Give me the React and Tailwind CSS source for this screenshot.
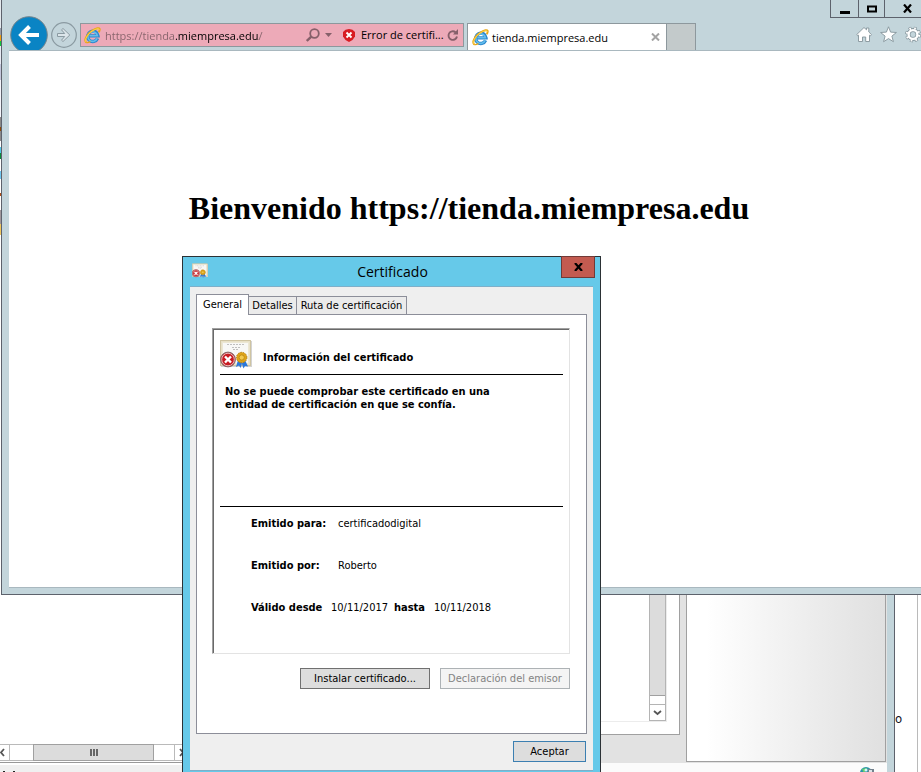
import React from "react";

const ui = "font-['DejaVu_Sans_Condensed','DejaVu_Sans',sans-serif]";

function ExplorerLogo() {
  return (
    <svg width="17" height="17" viewBox="0 0 17 17" className="shrink-0" aria-hidden="true">
      <path d="M13.6 11.4A5.2 5.2 0 1 1 14 8.9H5.4" fill="none" stroke="#2a86cc" strokeWidth="3.4" />
      <path d="M13.2 11.2A4.8 4.8 0 1 1 13.4 8.7H5.4" fill="none" stroke="#62bdec" strokeWidth="1.6" />
      <path d="M2.2 15.4C-.4 13.3 3 7 8 3.8 12 1 16 .2 15.7 2.6c-.1 1-.5 1.900-1 2.500" fill="none" stroke="#e8a818" strokeWidth="1.9" />
      <path d="M2.200 15.200C.2 13.300 3.200 7.200 8.200 4 12 1.500 15.400.9 15.300 2.800" fill="none" stroke="#fad956" strokeWidth=".9" />
      <path d="M2.200 15.400c1.200.6 3-.1 4.200-.9" fill="none" stroke="#e8a818" strokeWidth="1.300" />
    </svg>
  );
}

function CertificateIcon({ size }) {
  return (
    <svg width={size} height={size} viewBox="0 0 32 32" className="shrink-0" aria-hidden="true">
      <rect x="1" y="2" width="31" height="26" fill="#d4d4d4" />
      <rect x=".5" y="1.500" width="30" height="25" fill="#e8e1c8" stroke="#cfc4a2" />
      <rect x="2.500" y="3.500" width="26" height="21" fill="#f8f8f6" stroke="#ece7d4" />
      <path d="M7 5.500h18M12 8.500h8M13 10.500h6" stroke="#b8b8b8" strokeWidth=".9" strokeDasharray="2 1" />
      <path d="M18 21l-2 7 3-1.500 1.600 2.500 1.900-6zM25 21l3 6.500-3-.5-1.500 2.500-2-6z" fill="#2a78dc" />
      <circle cx="21.700" cy="18.500" r="5.200" fill="#dfa418" stroke="#b47c0a" strokeDasharray="1.500 1" />
      <circle cx="21.700" cy="18.500" r="2.600" fill="#f2c94e" stroke="#b98510" strokeWidth=".8" />
      <circle cx="8" cy="20.500" r="7.400" fill="#c81c22" stroke="#7b6b6b" />
      <circle cx="8" cy="20.500" r="6.300" fill="none" stroke="#eccaca" strokeWidth=".9" />
      <path d="M5 17.500l6 6M11 17.500l-6 6" stroke="#fff" strokeWidth="2.400" />
    </svg>
  );
}

const stripes = [
  ["h-[28px]", "bg-[#e4eaee]"], ["h-[7px]", "bg-[#98a0ac]"], ["h-[6px]", "bg-[#f0a010]"],
  ["h-[5px]", "bg-[#12c840]"], ["h-[18px]", "bg-[#e8ecf4]"], ["h-[16px]", "bg-[#c4c8dc]"],
  ["h-[37px]", "bg-[#f4f6fc]"], ["h-[10px]", "bg-[#8a8a8a]"], ["h-[4px]", "bg-[#8a4a08]"],
  ["h-[10px]", "bg-[#8a8a8a]"], ["h-[6px]", "bg-white"], ["h-[6px]", "bg-[#50c8e8]"],
  ["h-[6px]", "bg-[#0c8a3c]"], ["h-[12px]", "bg-white"], ["h-[8px]", "bg-[#70c8f0]"],
  ["h-[14px]", "bg-white"], ["h-[3px]", "bg-[#b05018]"], ["h-[14px]", "bg-white"],
  ["h-[14px]", "bg-[#a0989c]"], ["h-[11px]", "bg-[#f0c860]"],
];

function BackgroundWindow() {
  return (
    <div className="absolute inset-0 flex">
      <div className="flex min-w-0 flex-1 flex-col border-r border-[#5d626c] bg-[#c3d5db] pr-[7px]">
        <div className="flex min-h-0 flex-1 bg-[#e2e2e2]">
          <div className="flex w-[190px] shrink-0 flex-col bg-white">
            <div className="flex w-px flex-1 flex-col">
              {stripes.map(([h, c], i) => (
                <span key={i} className={`${h} ${c} w-px shrink-0`} />
              ))}
            </div>
            <div className="flex h-[17px] shrink-0 border-y border-[#bababa] bg-white">
              <button aria-label="Izquierda" className="flex w-[10px] items-center border-r border-[#bababa]">
                <svg width="5" height="9" viewBox="0 0 5 9"><path d="M4 1L1 4.500 4 8" fill="none" stroke="#555" strokeWidth="1.800" /></svg>
              </button>
              <span className="w-[23px]" />
              <span className="-my-px flex w-[121px] items-center justify-center gap-px border border-[#a0a0a0] bg-[#dcdcdc]">
                <i className="h-[7px] w-[2px] bg-[#666]" />
                <i className="h-[7px] w-[2px] bg-[#666]" />
                <i className="h-[7px] w-[2px] bg-[#666]" />
              </span>
              <button aria-label="Derecha" className="ml-5 flex items-center border-l border-[#bababa] pl-1">
                <svg width="5" height="9" viewBox="0 0 5 9"><path d="M1 1l3 3.500L1 8" fill="none" stroke="#555" strokeWidth="1.800" /></svg>
              </button>
            </div>
            <div className="h-[2px] border-b border-[#999]" />
          </div>
          <div className="mb-[28px] flex min-w-0 flex-1 border-r border-b border-[#a0a0a0] bg-white pr-3 pb-3">
            <div className="flex flex-1 justify-end border-r border-b border-[#ececec]">
              <div className="flex w-[17px] flex-col border-x border-[#b4b4b4] bg-white">
                <span className="flex-1 border-b border-[#a0a0a0] bg-[#dcdcdc]" />
                <span className="h-2" />
                <button aria-label="Abajo" className="flex h-[17px] items-center justify-center border-y border-[#b4b4b4]">
                  <svg width="9" height="6" viewBox="0 0 9 6"><path d="M1 1l3.500 3L8 1" fill="none" stroke="#555" strokeWidth="1.800" /></svg>
                </button>
              </div>
            </div>
          </div>
          <div className="mb-px ml-[6px] w-[200px] shrink-0 border border-[#a0a0a0] bg-linear-to-r from-white from-10% to-[#e0e0e0]" />
          <span className="w-px bg-[#e2e2e2]" />
        </div>
        <div className="flex h-[9px] shrink-0 justify-between bg-[#fbfbfb]">
          <div className="flex w-[190px] items-end gap-2 border-t-2 border-white bg-[#f0f0f0] pl-[3px]">
            <i className="h-px w-[2px] bg-[#222]" />
            <i className="h-px w-[2px] bg-[#222]" />
          </div>
          <svg width="28" height="9" viewBox="0 0 28 9" aria-hidden="true">
            <circle cx="7" cy="10" r="6" fill="#2c95a8" />
            <path d="M3 6l5-1-3 5z" fill="#65d36a" />
            <circle cx="7" cy="7" r="1.500" fill="#d8f4f8" />
            <rect x="9" y="6" width="6" height="3" fill="#71808c" />
            <rect x="10" y="7" width="3" height="2" fill="#dce4e8" />
          </svg>
        </div>
      </div>
      <div className={`${ui} flex w-[26px] shrink-0 items-end bg-white`}>
        <div className="h-full w-[23px] border-r border-[#bababa]">
          <div className="flex h-full items-end pb-[45px] text-[13px] leading-4 text-[#112]">o</div>
        </div>
      </div>
    </div>
  );
}

function BrowserWindow() {
  const frame = "flex items-center justify-center border-b border-l border-[#5d626c]";
  return (
    <section className="absolute top-0 -right-4 left-px flex h-[595px] flex-col border-b border-l border-[#5d626c] bg-[#c3d5db] pr-2 pb-[6px] font-['Open_Sans','Noto_Sans',sans-serif] text-[11px]">
      <header className="flex h-[50px] shrink-0 flex-col overflow-hidden">
        <div className="flex h-[18px] shrink-0 justify-end">
          <button aria-label="Minimizar" className={`${frame} w-[28px]`}>
            <svg width="10" height="10"><path d="M0 8.500h10" stroke="#000" strokeWidth="3" /></svg>
          </button>
          <button aria-label="Maximizar" className={`${frame} w-[26px]`}>
            <svg width="10" height="10"><path d="M1 2.500h8v5H1z" fill="none" stroke="#000" strokeWidth="2" /></svg>
          </button>
          <button aria-label="Cerrar" className={`${frame} w-[45px]`}>
            <svg width="9" height="9" viewBox="0 0 9 9"><path d="M1 .5l7 8M8 .5l-7 8" stroke="#000" strokeWidth="2.200" /></svg>
          </button>
        </div>
        <div className="flex h-8 shrink-0 items-start pl-2">
          <button aria-label="Atrás" className="-mt-[2px] shrink-0">
            <svg width="38" height="38" viewBox="0 0 38 38">
              <circle cx="19" cy="19" r="18.300" fill="#0a84c4" stroke="#77858c" />
              <path d="M29 19H11M19.500 10.500L11 19l8.500 8.500" fill="none" stroke="#fff" strokeWidth="4" />
            </svg>
          </button>
          <button aria-label="Adelante" className="mt-1 ml-[3px] shrink-0">
            <svg width="26" height="26" viewBox="0 0 26 26">
              <circle cx="13" cy="13" r="12.300" fill="none" stroke="#8a9aa1" strokeWidth="1.200" />
              <path d="M6.500 11.500h7.200l-3.200-3.700 1.500-1.300 6.800 6.500-6.800 6.500-1.500-1.300 3.200-3.700H6.500z" fill="#dce6ea" stroke="#8a9aa1" />
            </svg>
          </button>
          <div className="mt-[5px] ml-[3px] flex h-6 w-[384px] shrink-0 items-center border border-[#8d989d] bg-[#edaab8] pr-1 pl-[3px]">
            <ExplorerLogo />
            <input
              aria-label="Dirección"
              defaultValue="https://tienda.miempresa.edu/"
              className="ml-1 w-[201px] shrink-0 bg-[linear-gradient(to_right,#86636b_70px,#000_70px,#000_154px,#86636b_154px)] bg-clip-text pt-[2px] text-[11px] leading-5 text-transparent caret-black outline-none"
            />
            <button aria-label="Buscar">
              <svg width="14" height="14" viewBox="0 0 14 14"><circle cx="8.500" cy="5.500" r="4.300" fill="none" stroke="#86606a" strokeWidth="1.800" /><path d="M5.300 8.700L.8 13" stroke="#86606a" strokeWidth="2.400" /></svg>
            </button>
            <button aria-label="Historial" className="ml-[5px]">
              <svg width="7" height="4"><path d="M0 0h7L3.500 4z" fill="#86606a" /></svg>
            </button>
            <button className="ml-[11px] flex items-center gap-[6px] whitespace-nowrap">
              <svg width="12" height="13" viewBox="0 0 12 13" aria-hidden="true">
                <path d="M2.500.7L6 0l3.500.7L12 3v4.500L9.500 11 6 13 2.500 11 0 7.500V3z" fill="#d81c22" />
                <path d="M3.500 3.500l5 5M8.500 3.500l-5 5" stroke="#fff" strokeWidth="1.900" />
              </svg>
              <span className="pt-px">Error de certifi...</span>
            </button>
            <button aria-label="Actualizar" className="ml-auto">
              <svg width="12" height="13" viewBox="0 0 12 13"><path d="M8.500 3.200A4.300 4.300 0 1 0 10 7.500" fill="none" stroke="#86606a" strokeWidth="1.900" /><path d="M6 5.500h5V0z" fill="#86606a" /></svg>
            </button>
          </div>
          <div className="mt-[5px] ml-[3px] flex h-[27px] shrink-0 border border-b-0 border-[#8d989d]">
            <div className="flex w-[198px] items-center bg-white pr-[6px] pl-1">
              <ExplorerLogo />
              <span className="ml-[3px] flex-1 pt-[2px]">tienda.miempresa.edu</span>
              <button aria-label="Cerrar pestaña">
                <svg width="9" height="8" viewBox="0 0 9 8"><path d="M1 .5l7 7M8 .5l-7 7" stroke="#a3a3a3" strokeWidth="2" /></svg>
              </button>
            </div>
            <button aria-label="Nueva pestaña" className="w-[29px] border-l border-[#8d989d] bg-[#c3cacb]" />
          </div>
          <div className="mt-2 mr-2 ml-auto flex gap-2">
            <button aria-label="Inicio">
              <svg width="16" height="17" viewBox="0 0 16 17"><path d="M.8 8.500L8 1.500l2.500 2.300V2h2.300v4l2.700 2.600-1.200 1.300-.8-.7v6.300H9.700V11H6.500v4.500h-4V9.200l-.7.600z" fill="#fff" stroke="#84949b" strokeWidth=".9" /></svg>
            </button>
            <button aria-label="Favoritos">
              <svg width="17" height="17" viewBox="0 0 17 17"><path d="M8.500.8l2.100 5.300 5.800.4-4.500 3.600 1.500 5.600-4.900-3.100-4.900 3.100 1.500-5.600L.6 6.500l5.800-.4z" fill="#fff" stroke="#84949b" strokeWidth=".9" /></svg>
            </button>
            <button aria-label="Herramientas">
              <svg width="16" height="17" viewBox="0 0 16 17">
                <circle cx="8" cy="8.500" r="6.200" fill="none" stroke="#84949b" strokeWidth="3.400" strokeDasharray="2.600 2.270" />
                <circle cx="8" cy="8.500" r="4.500" fill="#c3d5db" stroke="#84949b" strokeWidth="4" />
                <circle cx="8" cy="8.500" r="6.200" fill="none" stroke="#fff" strokeWidth="2.200" strokeDasharray="1.600 3.270" strokeDashoffset="-.5" />
                <circle cx="8" cy="8.500" r="4.400" fill="none" stroke="#fff" strokeWidth="2.400" />
              </svg>
            </button>
          </div>
        </div>
      </header>
      <main className="ml-[7px] flex-1 border-y border-[#a9b8bf] bg-white pt-[139px]">
        <h1 className="text-center font-['Liberation_Serif',serif] text-[32px] leading-[37px] font-bold whitespace-nowrap">
          Bienvenido https://tienda.miempresa.edu
        </h1>
      </main>
    </section>
  );
}

function CertificateDialog() {
  const button = "flex h-[21px] items-center justify-center border";
  return (
    <section role="dialog" aria-label="Certificado" className={`${ui} absolute top-[256px] left-[182px] flex w-[419px] flex-col border border-[#2b3135] bg-[#66c9e9] px-[7px] pb-2 text-[11px] leading-[13px]`}>
      <header className="flex h-[29px] items-start">
        <div className="flex w-[34px] pt-[6px] pl-[2px]"><CertificateIcon size={16} /></div>
        <h2 className="flex-1 pt-1 text-center font-['Open_Sans','Noto_Sans',sans-serif] text-[14px] leading-[22px]">Certificado</h2>
        <button aria-label="Cerrar" className="-mt-px -mr-[2px] flex h-[22px] w-[34px] items-center justify-center border border-[#713a37] bg-[#c35b50]">
          <svg width="9" height="8" viewBox="0 0 9 8"><path d="M1 0l7 8M8 0L1 8" stroke="#000" strokeWidth="2.200" /></svg>
        </button>
      </header>
      <div className="border-y border-[#7eafc9] bg-[#efefef] px-[6px] pt-[7px] pb-2">
        <div role="tablist" className="flex items-end">
          <button role="tab" aria-selected="true" className="relative -mb-px h-[21px] w-[53px] border border-b-0 border-[#8c8e99] bg-white pb-[2px]">General</button>
          <button role="tab" aria-selected="false" className="h-[18px] w-[48px] border-t border-r border-[#8c8e99] bg-[#ebebeb]">Detalles</button>
          <button role="tab" aria-selected="false" className="h-[18px] w-[110px] border-t border-r border-[#8c8e99] bg-[#ebebeb]">Ruta de certificación</button>
        </div>
        <div role="tabpanel" className="border border-[#8c8e99] bg-white pt-[13px] pr-4 pb-11 pl-[15px]">
          <div className="border border-t-[#a0a0a0] border-r-[#e3e3e3] border-b-[#e3e3e3] border-l-[#a0a0a0]">
            <div className="border-t border-l border-[#696969] pt-[9px] pr-[6px] pb-[39px] pl-[6px]">
              <div className="flex h-9 border-b border-black">
                <CertificateIcon size={32} />
                <h3 className="ml-[11px] pt-3 font-bold">Información del certificado</h3>
              </div>
              <p className="h-[131px] pt-[10px] pl-[5px] font-bold">
                No se puede comprobar este certificado en una<br />entidad de certificación en que se confía.
              </p>
              <dl className="flex flex-col gap-[29px] border-t border-black pt-[10px] pl-[31px]">
                <div className="flex"><dt className="w-[87px] font-bold">Emitido para:</dt><dd>certificadodigital</dd></div>
                <div className="flex"><dt className="w-[87px] font-bold">Emitido por:</dt><dd>Roberto</dd></div>
                <div className="flex"><dt className="w-[80px] font-bold">Válido desde</dt><dd className="w-[63px]">10/11/2017</dd><dt className="w-10 font-bold">hasta</dt><dd>10/11/2018</dd></div>
              </dl>
            </div>
          </div>
          <div className="mt-[14px] flex justify-end gap-[10px]">
            <button className={`${button} w-[130px] border-[#707070] bg-[#dddddd]`}>Instalar certificado...</button>
            <button disabled className={`${button} w-[130px] border-[#adb2b5] bg-[#f4f4f4] text-[#838383]`}>Declaración del emisor</button>
          </div>
        </div>
        <div className="mt-[7px] flex justify-end pr-px">
          <button className={`${button} w-[73px] border-[#3c7fb1] bg-[#dddddd]`}>Aceptar</button>
        </div>
      </div>
    </section>
  );
}

export default function App() {
  return (
    <div className="relative h-screen w-full overflow-hidden bg-white text-black">
      <BackgroundWindow />
      <BrowserWindow />
      <CertificateDialog />
    </div>
  );
}
